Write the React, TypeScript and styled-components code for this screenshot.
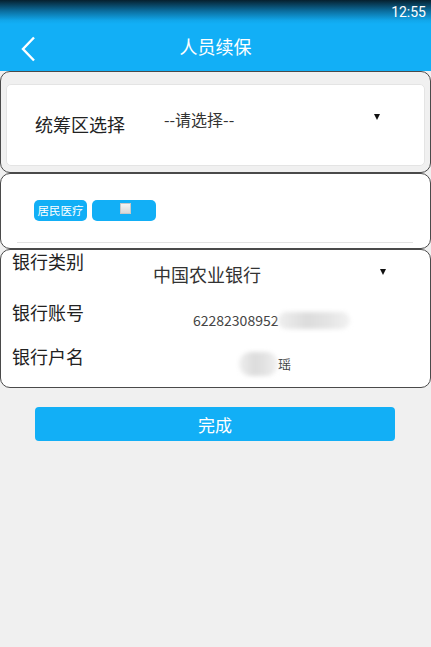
import styled, { createGlobalStyle } from "styled-components";

const GlobalStyle = createGlobalStyle`
  body {
    margin: 0;
    background: #f0f0f0;
    font-family: "Noto Sans CJK SC", Roboto, "Noto Sans", sans-serif;
  }
`;

const Screen = styled.div`
  width: 431px;
  min-height: 647px;
  background: #f0f0f0;
  display: flex;
  flex-direction: column;
`;

const StatusBar = styled.div`
  height: 24px;
  background: linear-gradient(#06202e 0%, #0b6c9c 45%, #11a6ea 85%, #12aff6 100%);
  display: flex;
  justify-content: flex-end;
  align-items: center;
  padding-right: 5px;
  color: #fff;
  font-family: Roboto, sans-serif;
  font-size: 14px;
`;

const Header = styled.header`
  height: 47px;
  background: #12aff6;
  display: grid;
  grid-template-columns: 60px 1fr 60px;
  align-items: center;
`;

const BackButton = styled.div`
  display: flex;
  align-items: center;
  padding: 2px 0 0 20px;
  height: 100%;
  box-sizing: border-box;
`;

const Title = styled.h1`
  margin: 0;
  text-align: center;
  color: #fff;
  font-size: 18px;
  font-weight: normal;
  line-height: 1;
  padding-bottom: 4px;
`;

const Card = styled.section<{ $bg: string; $h: number }>`
  box-sizing: border-box;
  height: ${(p) => p.$h}px;
  background: ${(p) => p.$bg};
  border: 1px solid #4a4a4a;
  border-radius: 10px;
  overflow: hidden;
`;

const AreaBox = styled.div`
  margin: 12px 5px 0 5px;
  height: 82px;
  box-sizing: border-box;
  background: #fff;
  border: 1px solid #e4e4e4;
  border-radius: 5px;
  display: flex;
  align-items: flex-start;
  padding-left: 28px;
`;

const AreaLabel = styled.span`
  font-size: 18px;
  color: #222;
  margin-top: 26px;
  width: 129px;
`;

const Select = styled.div<{ $top: number; $width: number; $size: number }>`
  display: flex;
  justify-content: space-between;
  align-items: center;
  margin-top: ${(p) => p.$top}px;
  width: ${(p) => p.$width}px;
  font-size: ${(p) => p.$size}px;
  color: #333;
`;

const Arrow = styled.span`
  width: 0;
  height: 0;
  border-left: 3.5px solid transparent;
  border-right: 3.5px solid transparent;
  border-top: 6px solid #111;
  margin-bottom: 4px;
`;

const ChipCard = styled.div`
  height: 100%;
  display: flex;
  flex-direction: column;
`;

const ChipRow = styled.div`
  display: flex;
  gap: 5px;
  padding: 26px 0 0 33px;
  flex: 1;
`;

const Chip = styled.span<{ $w: number }>`
  width: ${(p) => p.$w}px;
  height: 21px;
  border-radius: 5px;
  background: #12aff6;
  color: #fff;
  font-size: 11.5px;
  display: flex;
  justify-content: center;
  align-items: flex-start;
  line-height: 21px;
  white-space: nowrap;
`;

const CheckBox = styled.span`
  margin-top: 3px;
  margin-left: 2px;
  width: 9px;
  height: 9px;
  border: 1px solid #c8c8c8;
  background: linear-gradient(#f4f4f4, #d8d8d8);
`;

const Divider = styled.div`
  height: 1px;
  background: #e2e2e2;
  margin: 0 17px 5px 16px;
`;

const Row = styled.div<{ $h: number }>`
  height: ${(p) => p.$h}px;
  display: flex;
  align-items: flex-start;
  padding-left: 11px;
`;

const Label = styled.span<{ $top: number }>`
  font-size: 18px;
  color: #222;
  margin-top: ${(p) => p.$top}px;
  width: 141px;
  flex-shrink: 0;
  line-height: 22px;
`;

const Value = styled.span<{ $top: number; $left: number; $size: number }>`
  display: flex;
  align-items: center;
  margin-top: ${(p) => p.$top}px;
  margin-left: ${(p) => p.$left}px;
  font-size: ${(p) => p.$size}px;
  color: #444;
  line-height: 18px;
`;

const Blur = styled.span<{ $w: number; $h: number }>`
  display: inline-block;
  width: ${(p) => p.$w}px;
  height: ${(p) => p.$h}px;
  border-radius: 12px;
  background: linear-gradient(90deg, #efefef, #dcdcdc 40%, #e4e4e4 70%, #f2f2f2);
  filter: blur(2px);
`;

const Footer = styled.div`
  padding: 19px 36px 0 35px;
`;

const DoneButton = styled.button`
  width: 100%;
  height: 34px;
  border: none;
  border-radius: 4px;
  background: #12aff6;
  color: #fff;
  font-family: inherit;
  font-size: 17px;
  padding: 0;
`;

export default function App() {
  return (
    <Screen>
      <GlobalStyle />
      <StatusBar>12:55</StatusBar>
      <Header>
        <BackButton>
          <svg width="16" height="26" viewBox="0 0 16 26">
            <polyline points="14,1.5 3,13 14,24.5" fill="none" stroke="#fff" strokeWidth="2.4" />
          </svg>
        </BackButton>
        <Title>人员续保</Title>
        <span />
      </Header>

      <Card $bg="#f0f0f0" $h={102}>
        <AreaBox>
          <AreaLabel>统筹区选择</AreaLabel>
          <Select $top={22} $width={216} $size={16}>
            --请选择--
            <Arrow />
          </Select>
        </AreaBox>
      </Card>

      <Card $bg="#fff" $h={76}>
        <ChipCard>
          <ChipRow>
            <Chip $w={53}>居民医疗</Chip>
            <Chip $w={64}>
              <CheckBox />
            </Chip>
          </ChipRow>
          <Divider />
        </ChipCard>
      </Card>

      <Card $bg="#fff" $h={139}>
        <Row $h={48}>
          <Label $top={0}>银行类别</Label>
          <Select $top={11} $width={233} $size={18}>
            中国农业银行
            <Arrow />
          </Select>
        </Row>
        <Row $h={46}>
          <Label $top={3}>银行账号</Label>
          <Value $top={13} $left={40} $size={14}>
            62282308952
            <Blur $w={72} $h={17} />
          </Value>
        </Row>
        <Row $h={44}>
          <Label $top={1}>银行户名</Label>
          <Value $top={8} $left={86} $size={13}>
            <Blur $w={39} $h={24} />
            瑶
          </Value>
        </Row>
      </Card>

      <Footer>
        <DoneButton>完成</DoneButton>
      </Footer>
    </Screen>
  );
}
